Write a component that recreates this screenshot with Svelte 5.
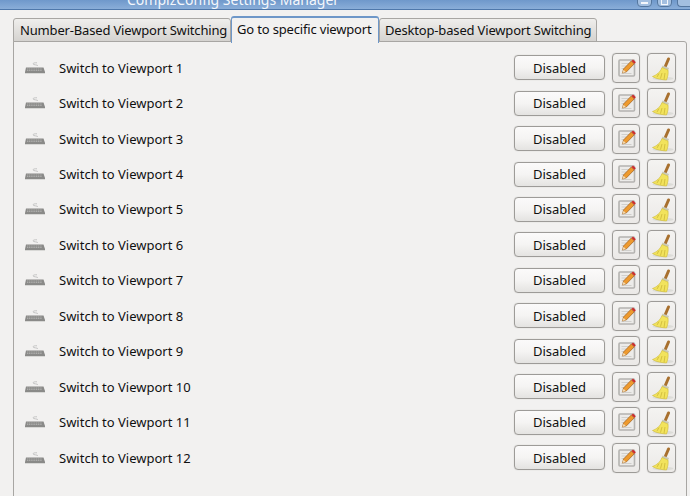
<script>
	const tabs = [
		{ label: 'Number-Based Viewport Switching', active: false },
		{ label: 'Go to specific viewport', active: true },
		{ label: 'Desktop-based Viewport Switching', active: false }
	];
	const rows = Array.from({ length: 12 }, (_, i) => `Switch to Viewport ${i + 1}`);
</script>

<div class="window">
	<header class="titlebar">
		<span class="title">CompizConfig Settings Manager</span>
		<div class="controls">
			<span class="ctl"><i class="dash"></i></span>
			<span class="ctl"><i class="box"></i></span>
			<span class="ctl last"></span>
		</div>
	</header>

	<div class="content">
		<div class="tabs">
			{#each tabs as tab}
				<div class="tab" class:active={tab.active}>{tab.label}</div>
			{/each}
		</div>

		<div class="panel">
			{#each rows as row}
				<div class="row">
					<svg class="kbd" width="22" height="14" viewBox="0 0 22 14">
						<path d="M14 5c0-1.500-5-.8-5-2.200 0-.8 2-1.200 4-1" fill="none" stroke="#c4c4c4" stroke-width="1" />
						<path d="M2 6.500h17.500l1.500 4.500v1.500H1V11z" fill="#8a8a88" />
						<path d="M3 8h15M3 9.500h15" stroke="#bdbdbb" stroke-width=".7" stroke-dasharray="1.200 .6" />
						<path d="M1 12.500h20" stroke="#d8d8d6" stroke-width="1" />
					</svg>
					<span class="name">{row}</span>
					<button class="binding">Disabled</button>
					<button class="icon-btn edit">
						<svg width="20" height="20" viewBox="0 0 20 20">
							<rect x="3" y="2" width="15.500" height="16" rx="1" fill="#ecebe9" stroke="#b4b3b0" stroke-width="1.600" />
							<path d="M5.500 5.500h8M5.500 8h5M5.500 10.500h3M5.500 15.500h10" stroke="#d0cfcc" stroke-width="1" />
							<path d="M6.500 15l1-4 7.800-8 3 2.800-7.800 8z" fill="#ee9a2e" stroke="#9c5c18" stroke-width=".7" />
							<path d="M15.500 3l1.500-1.500 2.800 2.700-1.500 1.600z" fill="#cc2b2b" />
							<path d="M6.500 15l1-3.300 2.400 2.300z" fill="#f3dcb4" />
						</svg>
					</button>
					<button class="icon-btn clear">
						<svg width="24" height="26" viewBox="0 0 24 26">
							<ellipse cx="13" cy="23.500" rx="10.500" ry="1.800" fill="#dcdcd8" />
							<path d="M15.500 11l3-7" stroke="#a8702e" stroke-width="3" stroke-linecap="round" />
							<path d="M12.500 10.500l6.500 2.500-.8 2-6.500-2.500z" fill="#c9c9b8" />
							<path d="M12 12.500l6 2.500c.5 3.500-.2 7-1.500 10-3-.2-11-1-14-3.500 4-1.500 7.500-4 9.500-9z" fill="#f2e35c" stroke="#cdb838" stroke-width=".6" />
							<path d="M9 18.500l-2 3.500M12 18l-1.500 5.500M15 18l-1 6.500" stroke="#cdb838" stroke-width=".8" />
						</svg>
					</button>
				</div>
			{/each}
		</div>
	</div>
</div>

<style>
	:global(body) {
		margin: 0;
		overflow: hidden;
	}

	.window {
		width: 690px;
		height: 496px;
		display: flex;
		flex-direction: column;
		background: #f2f1f0;
		font-family: "Noto Sans", "Open Sans", sans-serif;
		font-size: 13px;
		color: #101010;
		overflow: hidden;
	}

	.titlebar {
		height: 10px;
		flex: none;
		display: flex;
		align-items: flex-end;
		justify-content: space-between;
		background: linear-gradient(#6f98cb, #8aaed8);
		border-bottom: 1px solid #4f78ab;
		box-sizing: border-box;
		overflow: hidden;
		padding: 0 0 0 127px;
	}

	.title {
		color: #f4f7fb;
		font-size: 14px;
		line-height: 18px;
		white-space: nowrap;
	}

	.controls {
		display: flex;
		gap: 5px;
		align-self: flex-start;
		margin-top: -8px;
	}

	.ctl {
		width: 15px;
		height: 15px;
		box-sizing: border-box;
		border: 1px solid #55779f;
		border-radius: 4px;
		background: #a3bfe0;
		display: flex;
		align-items: center;
		justify-content: center;
	}

	.ctl.last {
		width: 13px;
		border-right: none;
		border-radius: 4px 0 0 4px;
	}

	.dash {
		width: 7px;
		height: 2px;
		margin-top: 6px;
		background: #f4f7fb;
	}

	.box {
		width: 7px;
		height: 7px;
		margin-top: 3px;
		box-sizing: border-box;
		border: 1px solid #f4f7fb;
	}

	.content {
		flex: 1;
		display: flex;
		flex-direction: column;
		padding: 5px 3px 0 13px;
		min-height: 0;
	}

	.tabs {
		display: flex;
		align-items: flex-end;
		height: 27px;
		flex: none;
		position: relative;
		z-index: 1;
		margin-bottom: -1px;
	}

	.tab {
		height: 24px;
		box-sizing: border-box;
		padding: 0 5px;
		display: flex;
		align-items: center;
		white-space: nowrap;
		letter-spacing: -0.17px;
		background: linear-gradient(#efeeec, #d5d3d0);
		border: 1px solid #a8a6a3;
		border-radius: 3px 3px 0 0;
	}

	.tab:first-child {
		width: 218px;
		padding-left: 6px;
	}

	.tab:last-child {
		width: 218px;
	}

	.tab.active {
		width: 148px;
		height: 27px;
		margin-bottom: -1px;
		padding-bottom: 3px;
		background: #f2f1f0;
		border-color: #6e97c8;
		border-top-width: 2px;
		border-bottom: none;
	}

	.panel {
		flex: none;
		height: 480px;
		display: flex;
		flex-direction: column;
		border: 1px solid #a8a6a3;
		border-radius: 0 3px 0 0;
		padding: 8px 10px 0 10px;
		box-sizing: border-box;
	}

	.row {
		height: 35.45px;
		flex: none;
		display: flex;
		align-items: center;
	}

	.kbd {
		flex: none;
	}

	.name {
		flex: 1;
		margin-left: 13px;
	}

	button {
		font: inherit;
		color: inherit;
		padding: 0;
		box-sizing: border-box;
		border: 1px solid #9d9b98;
		border-radius: 4px;
		box-shadow: 0 0 1px #b5b3b0;
		background: linear-gradient(#fbfafa, #f5f4f3 50%, #e4e3e1);
		display: flex;
		align-items: center;
		justify-content: center;
		flex: none;
	}

	.binding {
		width: 91px;
		height: 25px;
	}

	.icon-btn {
		height: 30px;
		background: linear-gradient(#f4f3f1, #ebe9e7);
	}

	.edit {
		width: 28px;
		margin-left: 7px;
	}

	.clear {
		width: 29px;
		margin-left: 7px;
	}
</style>
